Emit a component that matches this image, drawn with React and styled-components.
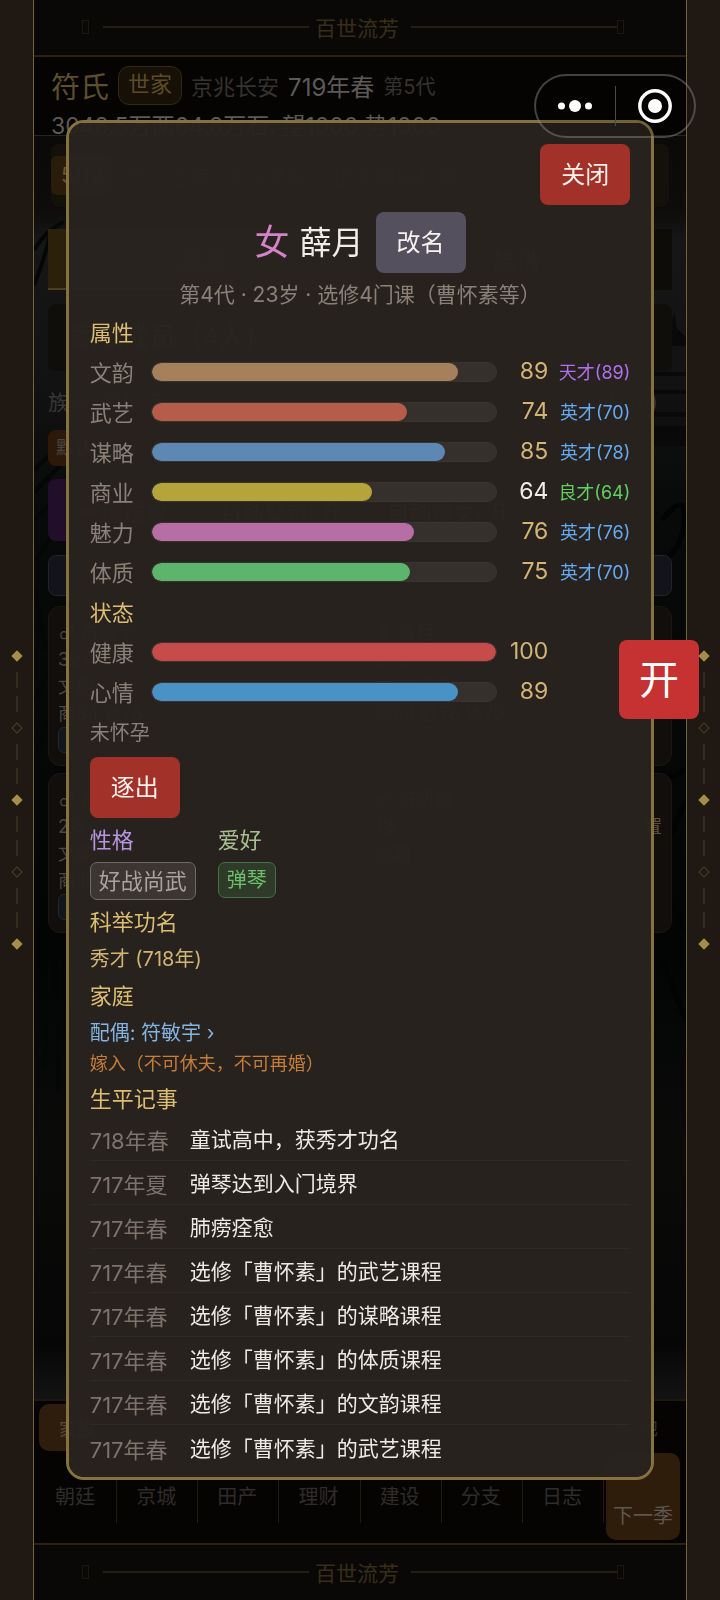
import React from 'react';
import styled, { createGlobalStyle } from 'styled-components';

const Global = createGlobalStyle`
  *, *::before, *::after { box-sizing: border-box; }
  body { margin: 0; background: #070605; }
  body, button { font-family: Inter, "Noto Sans CJK SC", sans-serif; }
  h1, h2, p, ul { margin: 0; padding: 0; font-weight: 400; }
  ul { list-style: none; }
  button { border: 0; padding: 0; color: inherit; cursor: pointer; }
`;

/* ---------- frame ---------- */
const Shell = styled.div`
  display: grid;
  grid-template-columns: 34px minmax(0, 1fr) 34px;
  min-height: 100vh;
`;
const Rail = styled.aside`
  display: flex;
  flex-direction: column;
  align-items: center;
  justify-content: center;
  background: linear-gradient(90deg, #1e1913, #201813);
  border: 0 solid #75623a;
  border-right-width: ${(p) => (p.$side === 'left' ? '1px' : 0)};
  border-left-width: ${(p) => (p.$side === 'right' ? '1px' : 0)};
`;
const Bead = styled.span`
  display: flex;
  align-items: center;
  justify-content: center;
  height: 24px;
  &::before {
    content: '';
    width: ${(p) => (p.$kind === 'dash' ? '2px' : '8px')};
    height: ${(p) => (p.$kind === 'dash' ? '16px' : '8px')};
    background: ${(p) => ({ dash: '#352a1c', solid: '#a88c4e', hollow: 'none' })[p.$kind]};
    border: ${(p) => (p.$kind === 'hollow' ? '1px solid #4c3f29' : 0)};
    transform: ${(p) => (p.$kind === 'dash' ? 'none' : 'rotate(45deg)')};
  }
`;
const Game = styled.div`
  display: flex;
  flex-direction: column;
  position: relative;
  overflow: hidden;
`;
const Banner = styled.div`
  display: flex;
  align-items: center;
  justify-content: center;
  height: 57px;
  padding: 0 62px 2px 48px;
  background: #0a0807;
  border: 0 solid #29220f;
  border-bottom-width: ${(p) => (p.$end ? 0 : '2px')};
  border-top-width: ${(p) => (p.$end ? '2px' : 0)};
  color: #382e18;
  font-size: 21px;
`;
const Tofu = styled.span`
  width: 7px;
  height: 14px;
  border: 1px solid #1d180f;
`;
const Rule = styled.span`
  flex: 1;
  height: 2px;
  margin: ${(p) => (p.$first ? '0 6px 0 14px' : '0 0 0 12px')};
  background: #241d10;
`;

/* ---------- dimmed game page ---------- */
const Info = styled.header`
  height: 79px;
  padding: 8px 17px 0;
  background: #050403;
  border-bottom: 1px solid #29231a;
  color: #5d5a57;
  font-size: 23px;
`;
const InfoRow = styled.div`
  display: flex;
  align-items: center;
  gap: 9px;
  height: 40px;
  font-size: 22px;
  white-space: nowrap;
`;
const Clan = styled.h1`
  font-size: 29px;
  color: #5c4f2a;
`;
const Rank = styled.span`
  height: 39px;
  padding: 0 9px;
  line-height: 34px;
  border: 1px solid #33290f;
  border-radius: 11px;
  background: #161006;
  color: #5c4b25;
`;
const Place = styled.span`
  color: #35322f;
`;
const Year = styled.span`
  font-size: 24px;
`;
const Gen = styled.span`
  font-size: 20px;
  color: #35322f;
`;
const Funds = styled.p`
  line-height: 42px;
  white-space: nowrap;
`;
const Task = styled.div`
  display: flex;
  align-items: center;
  gap: 16px;
  height: 63px;
  margin: 8px 17px 22px;
  background: #14100a;
  border-radius: 8px;
  color: #40382a;
  font-size: 21px;
  white-space: nowrap;
`;
const Count = styled.span`
  padding: 0 10px;
  line-height: 39px;
  border-radius: 6px;
  background: #291d0a;
  color: #6b542b;
`;
const Reward = styled.span`
  margin-left: auto;
  padding-right: 80px;
`;
const Main = styled.main`
  flex: 1;
  padding: 0 14px;
  color: #4a4743;
  font-size: 21px;
`;
const Scene = styled.svg`
  position: absolute;
  inset: 0;
  width: 100%;
  height: 100%;
  z-index: -1;
`;
const Tabs = styled.div`
  display: grid;
  grid-template-columns: 1fr 1fr;
  height: 61px;
  margin-bottom: 14px;
`;
const Tab = styled.button`
  background: ${(p) => (p.$on ? '#2b210b' : '#0e0c09')};
  border-bottom: ${(p) => (p.$on ? '2px solid #4c3f1c' : 0)};
  font-size: 24px;
`;
const Panel = styled.div`
  height: 67px;
  padding: 0 24px;
  line-height: 66px;
  font-size: 26px;
  border-radius: 8px;
  background: #100e0a;
`;
const Between = styled.div`
  display: flex;
  justify-content: space-between;
  line-height: 30px;
  margin: 17px 0 12px;
  padding-right: 14px;
  color: #3a3834;
`;
const Split = styled.span`
  display: flex;
  justify-content: space-between;
  color: #5a4f36;
`;
const Chip = styled.span`
  display: inline-block;
  padding: 0 8px;
  line-height: 36px;
  border-radius: 8px;
  background: #2e1908;
  font-size: 18px;
`;
const Toggles = styled.div`
  display: grid;
  grid-template-columns: 150px 1fr 1fr;
  height: 62px;
  margin: 13px 140px 14px 0;
`;
const Toggle = styled.button`
  background: ${(p) => (p.$main ? '#200e2b' : 'none')};
  border-radius: 8px;
  font-size: 22px;
  white-space: nowrap;
`;
const Notice = styled.div`
  height: 41px;
  border: 1px solid #20242c;
  border-radius: 8px;
  background: #12141a;
`;
const Members = styled.div`
  display: grid;
  grid-template-columns: 1fr 1fr;
  gap: 7px 10px;
  margin-top: 10px;
`;
const Member = styled.article`
  display: flex;
  flex-direction: column;
  height: 160px;
  padding: 12px 9px;
  line-height: 27px;
  font-size: 18px;
  background: #110e0b;
  border: 1px solid #1b1713;
  border-radius: 12px;
`;
const Mood = styled.span`
  align-self: flex-start;
  width: 60px;
  height: 27px;
  border: 1px solid #1e2830;
  border-radius: 6px;
  background: #11171b;
`;
const Dock = styled.footer`
  position: relative;
  height: 144px;
  background: #050403;
  border-top: 2px solid #1c1810;
  color: #2f2c29;
`;
const DockTop = styled.div`
  display: flex;
  align-items: center;
  justify-content: space-between;
  padding: 3px 28px 0 5px;
  font-size: 20px;
`;
const DockMain = styled.button`
  width: 120px;
  height: 47px;
  padding-left: 20px;
  text-align: left;
  border-radius: 10px;
  background: #2e1c0c;
  color: #5c4b2e;
  font-size: 18px;
`;
const Nav = styled.nav`
  display: grid;
  grid-template-columns: repeat(7, 1fr);
  margin: 20px 82px 0 2px;
`;
const NavItem = styled.button`
  height: 52px;
  padding: 0 2px 4px 0;
  border-right: 1px solid #1f1a13;
  background: none;
  font-size: 20px;
`;
const Next = styled.button`
  position: absolute;
  right: 6px;
  bottom: 3px;
  width: 74px;
  height: 87px;
  padding-top: 36px;
  border-radius: 10px;
  background: #2e1d0b;
  color: #5e5650;
  font-size: 20px;
`;

/* ---------- person dialog ---------- */
const Overlay = styled.div`
  position: fixed;
  inset: 0 33px;
  display: flex;
  align-items: center;
  justify-content: center;
  padding-bottom: 1px;
`;
const Dialog = styled.section`
  display: flex;
  flex-direction: column;
  gap: 7px;
  width: 90%;
  max-height: 85vh;
  padding: 21px;
  overflow: hidden auto;
  scrollbar-width: none;
  background: rgba(40, 35, 31, 0.97);
  border: 3px solid #85723f;
  border-radius: 18px;
  color: #8b8078;
  > * { flex-shrink: 0; }
`;
const Action = styled.button`
  align-self: ${(p) => p.$align || 'center'};
  width: 90px;
  height: 61px;
  padding-bottom: 4px;
  border-radius: 8px;
  background: ${(p) => p.$bg || '#a13129'};
  color: #f6f1ec;
  font-size: 24px;
`;
const NameRow = styled.div`
  display: flex;
  align-items: center;
  justify-content: center;
  gap: 12px;
  font-size: 32px;
  line-height: 61px;
  color: #f1ece6;
`;
const Sex = styled.span`
  margin-right: -2px;
  font-size: 35px;
  color: #d583c8;
`;
const Summary = styled.p`
  line-height: 30px;
  text-align: center;
  font-size: 21px;
  color: #8b8078;
`;
const Title = styled.h2`
  line-height: ${(p) => (p.$tight ? 28 : 30)}px;
  font-size: 22px;
  color: ${(p) => p.$tone || '#dcbd72'};
`;
const Group = styled.div`
  display: flex;
  flex-direction: column;
  gap: ${(p) => p.$gap}px;
  margin: ${(p) => p.$margin || 0};
`;
const Stat = styled.div`
  display: grid;
  grid-template-columns: 61px minmax(0, 1fr) 51px 82px;
  align-items: center;
  height: 32px;
  font-size: 22px;
  white-space: nowrap;
  > span { padding-bottom: 3px; }
`;
const Track = styled.div`
  height: 20px;
  border-radius: 10px;
  background: #35302b;
  border: 1px solid #39342f;
  overflow: hidden;
`;
const Fill = styled.div`
  height: 100%;
  border-radius: 10px;
  background: ${(p) => p.$color};
`;
const Value = styled.span`
  text-align: right;
  font-size: 23px;
  color: ${(p) => (p.$plain ? '#f1ece6' : '#d2b475')};
`;
const Grade = styled.span`
  text-align: right;
  font-size: 18px;
  color: ${(p) => p.$color};
`;
const Line = styled.p`
  line-height: 30px;
  font-size: ${(p) => p.$size || 20}px;
  color: ${(p) => p.$color || 'inherit'};
`;
const Spouse = styled.a`
  color: #84b4e2;
  text-decoration: none;
`;
const Traits = styled.div`
  display: flex;
  gap: 22px;
`;
const Trait = styled.span`
  align-self: flex-start;
  padding: 0 8px;
  line-height: ${(p) => (p.$hobby ? 34 : 36)}px;
  font-size: ${(p) => (p.$hobby ? 20 : 22)}px;
  color: ${(p) => (p.$hobby ? '#6cc06c' : '#aaa39b')};
  background: ${(p) => (p.$hobby ? '#2f3a28' : '#3c3632')};
  border: 1px solid ${(p) => (p.$hobby ? '#457249' : '#706a65')};
  border-radius: 7px;
`;
const Log = styled.ul`
  display: flex;
  flex-direction: column;
`;
const Entry = styled.li`
  display: grid;
  grid-template-columns: 100px 1fr;
  align-items: center;
  height: 44px;
  border-bottom: 1px solid #2f2a26;
  font-size: 21px;
  color: #eee9e3;
  &:last-child { border-bottom: 0; }
`;
const When = styled.time`
  padding-top: 2px;
  font-size: 22px;
  color: #7d736b;
`;

/* ---------- floating controls ---------- */
const Capsule = styled.div`
  position: fixed;
  top: 74px;
  right: 24px;
  display: grid;
  grid-template-columns: 1fr 1px 1fr;
  align-items: center;
  width: 162px;
  height: 64px;
  border: 2px solid rgba(160, 160, 155, 0.4);
  border-radius: 32px;
  background: rgba(0, 0, 0, 0.15);
`;
const CapsuleButton = styled.button`
  display: flex;
  justify-content: center;
  background: none;
`;
const CapsuleRule = styled.span`
  height: 40px;
  background: #4a4a48;
`;
const Seal = styled.button`
  position: fixed;
  top: 40vh;
  right: 21px;
  width: 80px;
  height: 79px;
  padding-bottom: 6px;
  border-radius: 8px;
  background: #c63132;
  color: #fff;
  font-size: 40px;
`;

const BEADS = ['solid', 'dash', 'dash', 'hollow', 'dash', 'dash', 'solid', 'dash', 'dash', 'hollow', 'dash', 'dash', 'solid'];
const BLUE = '#64aaf0';
const SKILLS = [
  ['文韵', 89, '#a6805a', '天才(89)', '#b070f0'],
  ['武艺', 74, '#b65c4a', '英才(70)', BLUE],
  ['谋略', 85, '#5d88b4', '英才(78)', BLUE],
  ['商业', 64, '#b5a43a', '良才(64)', '#5fd060'],
  ['魅力', 76, '#b66ea4', '英才(76)', BLUE],
  ['体质', 75, '#5db46c', '英才(70)', BLUE],
];
const STATES = [
  ['健康', 100, '#c84b4b'],
  ['心情', 89, '#4992c6'],
];
const EVENTS = [
  ['718年春', '童试高中，获秀才功名'],
  ['717年夏', '弹琴达到入门境界'],
  ['717年春', '肺痨痊愈'],
  ['717年春', '选修「曹怀素」的武艺课程'],
  ['717年春', '选修「曹怀素」的谋略课程'],
  ['717年春', '选修「曹怀素」的体质课程'],
  ['717年春', '选修「曹怀素」的文韵课程'],
  ['717年春', '选修「曹怀素」的武艺课程'],
];
const NAV = ['朝廷', '京城', '田产', '理财', '建设', '分支', '日志'];

const SideRail = ({ side }) => (
  <Rail $side={side} aria-hidden="true">
    {BEADS.map((kind, i) => <Bead key={i} $kind={kind} />)}
  </Rail>
);

const Plaque = ({ end }) => (
  <Banner $end={end}>
    <Tofu /><Rule $first />百世流芳<Rule /><Tofu />
  </Banner>
);

const StatRow = ({ item: [label, value, color, grade, gradeColor] }) => (
  <Stat>
    <span>{label}</span>
    <Track><Fill $color={color} style={{ width: `${value}%` }} /></Track>
    <Value $plain={value < 70}>{value}</Value>
    <Grade $color={gradeColor}>{grade}</Grade>
  </Stat>
);

const Landscape = () => (
  <Scene viewBox="0 0 652 1600" preserveAspectRatio="none" aria-hidden="true">
    <defs>
      <linearGradient id="mist" x1="0" y1="0" x2="0" y2="1">
        <stop offset="0.09" stopColor="#0b0a09" />
        <stop offset="0.13" stopColor="#0d0c0b" />
        <stop offset="0.15" stopColor="#161616" />
        <stop offset="0.24" stopColor="#121213" />
        <stop offset="0.32" stopColor="#080909" />
        <stop offset="0.6" stopColor="#030505" />
        <stop offset="0.72" stopColor="#0a0a09" />
        <stop offset="0.84" stopColor="#060606" />
        <stop offset="0.88" stopColor="#151515" />
      </linearGradient>
    </defs>
    <rect width="652" height="1600" fill="url(#mist)" />
    <path d="M0 250q12-20 30-28M0 285q10-24 16-50M0 470l32-30M0 492l32-32M0 520l30-30M2 560l26-40M0 590l12 60M2 700l26-60M4 750l24-70M0 860l28-90M16 960l-6 110M26 960l-2 130" stroke="#050707" strokeWidth="4" fill="none" />
    <path d="M640 312l3 16 9 10v8h-28l12-16zM620 372h32v4h-32zM616 390h36v4h-36zM614 412h38v5h-38zM618 426h34v20h-34z" fill="#0a0909" />
    <path d="M628 520q24-30 22 0t-20 40M630 780l22-10M630 850l22-50M634 900l18 30M628 960l24 60" stroke="#020303" strokeWidth="5" fill="none" />
  </Scene>
);

export default function App() {
  return (
    <>
      <Global />
      <Shell>
        <SideRail side="left" />
        <Game>
          <Plaque />
          <Info>
            <InfoRow>
              <Clan>符氏</Clan><Rank>世家</Rank><Place>京兆长安</Place>
              <Year>719年春</Year><Gen>第5代</Gen>
            </InfoRow>
            <Funds>3048.5万两64.8万石. 望1000 势1000</Funds>
          </Info>
          <Task>
            <Count>5/12</Count>
            <span>结交世家: 向任意NPC世家赠送礼物</span>
            <Reward>+300</Reward>
          </Task>
          <Main>
            <Tabs><Tab $on>成员</Tab><Tab>族谱</Tab></Tabs>
            <Panel>家族成员（4人）</Panel>
            <Between><span>族长: 符敏宇</span><span>(4/20)</span></Between>
            <Chip>默认</Chip>
            <Toggles>
              <Toggle $main>一键婚嫁</Toggle><Toggle>自动娶亲: 开</Toggle><Toggle>自动嫁女: 开</Toggle>
            </Toggles>
            <Notice />
            <Members>
              <Member><span>♂ 符敏宇</span><span>32岁</span><span>文韵</span><span>商64 魅76</span><Mood /></Member>
              <Member><span>♀ 薛月</span><span>23岁</span><span>文89 武74</span><span>商64 魅76 体70</span><Mood /></Member>
              <Member><span>♂ 符文</span><span>2岁</span><span>文韵</span><span>商业</span><Mood /></Member>
              <Member><span>♂ 符昭毅</span><Split><span>1岁</span><span>置</span></Split><span>文韵</span></Member>
            </Members>
          </Main>
          <Dock>
            <DockTop><DockMain>家族</DockMain><Line>其他</Line></DockTop>
            <Nav>{NAV.map((n) => <NavItem key={n}>{n}</NavItem>)}</Nav>
            <Next>下一季</Next>
          </Dock>
          <Plaque end />
          <Landscape />
        </Game>
        <SideRail side="right" />
      </Shell>

      <Overlay>
        <Dialog role="dialog" aria-label="薛月">
          <Action $align="flex-end">关闭</Action>
          <NameRow><Sex>女</Sex>薛月<Action $bg="#54505d">改名</Action></NameRow>
          <Summary>第4代 · 23岁 · 选修4门课（曹怀素等）</Summary>
          <Group $gap={8} $margin="2px 0 5px">
            <Title $tight>属性</Title>
            {SKILLS.map((s) => <StatRow key={s[0]} item={s} />)}
          </Group>
          <Group $gap={8} $margin="0 0 4px">
            <Title $tight>状态</Title>
            {STATES.map((s) => <StatRow key={s[0]} item={s} />)}
          </Group>
          <Group $gap={9}>
            <Line>未怀孕</Line>
            <Action $align="flex-start">逐出</Action>
          </Group>
          <Traits>
            <Group $gap={7}><Title $tone="#b795e0">性格</Title><Trait>好战尚武</Trait></Group>
            <Group $gap={7}><Title $tone="#a9bf91">爱好</Title><Trait $hobby>弹琴</Trait></Group>
          </Traits>
          <Title>科举功名</Title>
          <Line $color="#d2b475">秀才 (718年)</Line>
          <Title>家庭</Title>
          <Group $gap={1}>
            <Line><Spouse href="#spouse">配偶: 符敏宇 ›</Spouse></Line>
            <Line $size={18} $color="#c67d3a">嫁入（不可休夫，不可再婚）</Line>
          </Group>
          <Group $gap={3} $margin="-2px 0 0">
            <Title>生平记事</Title>
            <Log>
              {EVENTS.map(([when, what], i) => (
                <Entry key={i}><When>{when}</When><span>{what}</span></Entry>
              ))}
            </Log>
          </Group>
        </Dialog>
      </Overlay>

      <Seal>开</Seal>
      <Capsule>
        <CapsuleButton aria-label="更多">
          <svg width="36" height="14" viewBox="0 0 36 14" fill="#fff">
            <circle cx="4.5" cy="7" r="3.5" /><circle cx="18" cy="7" r="6" /><circle cx="31.5" cy="7" r="3.5" />
          </svg>
        </CapsuleButton>
        <CapsuleRule />
        <CapsuleButton aria-label="退出">
          <svg width="34" height="34" viewBox="0 0 34 34">
            <circle cx="17" cy="17" r="15.2" fill="none" stroke="#fff" strokeWidth="3.4" />
            <circle cx="17" cy="17" r="7" fill="#fff" />
          </svg>
        </CapsuleButton>
      </Capsule>
    </>
  );
}
